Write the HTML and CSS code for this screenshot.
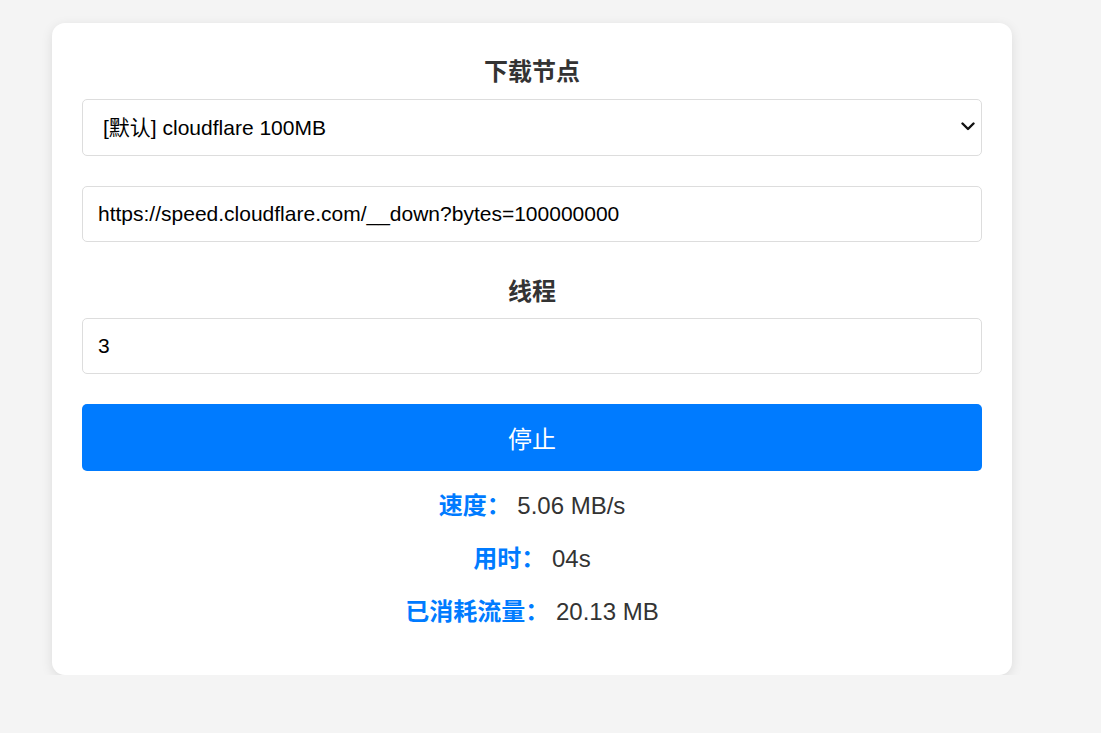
FILE: index.html
```html
<!DOCTYPE html>
<html lang="zh-CN">
<head>
<meta charset="utf-8">
<title>测速</title>
<link rel="stylesheet" href="styles.css">
</head>
<body>
<div class="card">
  <div class="label">下载节点</div>
  <div class="select-wrap">
    <select class="field select">
      <option>[默认] cloudflare 100MB</option>
    </select>
    <svg class="chevron" width="14" height="9" viewBox="0 0 14 9"><path d="M1.5 1.5 L7 7 L12.5 1.5" fill="none" stroke="#111" stroke-width="2.4" stroke-linecap="round" stroke-linejoin="round"/></svg>
  </div>
  <input class="field url" type="text" value="https://speed.cloudflare.com/__down?bytes=100000000">
  <div class="label label-threads">线程</div>
  <input class="field" type="text" value="3">
  <button class="btn">停止</button>
  <div class="stats">
    <div class="stat"><span class="k">速度：</span> <span class="v">5.06 MB/s</span></div>
    <div class="stat"><span class="k">用时：</span> <span class="v">04s</span></div>
    <div class="stat"><span class="k">已消耗流量：</span> <span class="v">20.13 MB</span></div>
  </div>
</div>
</body>
</html>
```
FILE: styles.css
```css
html, body {
  margin: 0;
  padding: 0;
  background: #f4f4f4;
}
body {
  padding: 23px 0 0 52px;
  font-family: "Liberation Sans", Arial, "Noto Sans CJK SC", sans-serif;
  color: #333;
}
.card {
  width: 960px;
  box-sizing: border-box;
  background: #fff;
  border-radius: 13px;
  box-shadow: 0 3px 12px rgba(0, 0, 0, 0.1);
  padding: 30px 30px 37px;
  display: flex;
  flex-direction: column;
}
.label {
  font-size: 24px;
  font-weight: bold;
  text-align: center;
  line-height: 30px;
  padding-top: 4px;
  margin-bottom: 12px;
  color: #333;
}
.label-threads {
  padding-top: 0;
  margin-top: 35px;
  margin-bottom: 11px;
}
.select-wrap {
  position: relative;
}
.field {
  display: block;
  width: 100%;
  box-sizing: border-box;
  border: 1px solid #ddd;
  border-radius: 5px;
  background: #fff;
  font-family: "Liberation Sans", Arial, "Noto Sans CJK SC", sans-serif;
  font-size: 21px;
  line-height: 24px;
  padding: 15px 14px 15px 15px;
  color: #000;
  outline: none;
  margin: 0;
}
.select {
  -webkit-appearance: none;
  appearance: none;
  height: 57px;
  padding: 15px 40px 15px 20px;
}
.chevron {
  position: absolute;
  right: 7px;
  top: 23px;
  pointer-events: none;
}
.url {
  margin-top: 30px;
  height: 56px;
}
.btn {
  margin-top: 30px;
  height: 67px;
  border: none;
  border-radius: 5px;
  background: #007bff;
  color: #fff;
  font-family: "Liberation Sans", Arial, "Noto Sans CJK SC", sans-serif;
  font-size: 24px;
  cursor: pointer;
}
.stats {
  margin-top: 8px;
}
.stat {
  line-height: 53px;
  font-size: 24px;
  text-align: center;
  color: #333;
}
.k {
  color: #007bff;
  font-weight: bold;
}
```
